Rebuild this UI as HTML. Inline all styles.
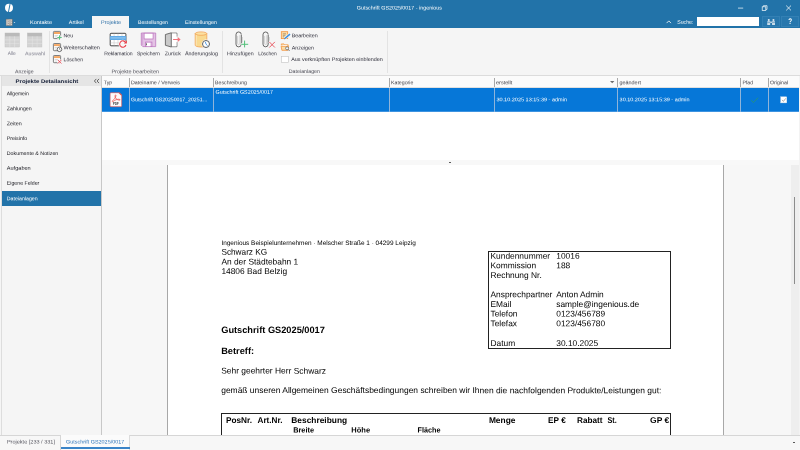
<!DOCTYPE html><html><head><meta charset="utf-8"><title>Gutschrift GS2025/0017 - ingenious</title><style>
html,body{margin:0;padding:0;}body{width:800px;height:450px;overflow:hidden;position:relative;background:#f5f5f5;font-family:"Liberation Sans", sans-serif;}
#app{position:absolute;left:0;top:0;width:800px;height:450px;overflow:hidden;will-change:transform;}
#app div{position:absolute;}
#app span{position:absolute;left:0;top:0;white-space:nowrap;line-height:1;transform-origin:0 0;}
#app svg{position:absolute;left:0;top:0;}
</style></head><body><div id="app">
<div style="left:0px;top:0px;width:800px;height:27.5px;background:#2273a9;"></div>
<div style="left:92.3px;top:16px;width:36.7px;height:12px;background:#f5f5f5;"></div>
<div style="left:0px;top:27.5px;width:800px;height:48px;background:#f5f5f5;"></div>
<div style="left:0px;top:75.3px;width:800px;height:0.9px;background:#dcdcdc;"></div>
<div style="left:49.4px;top:30.5px;width:0.8px;height:42px;background:#e3e3e3;"></div>
<div style="left:222.4px;top:30.5px;width:0.8px;height:42px;background:#e3e3e3;"></div>
<div style="left:386.6px;top:30.5px;width:0.8px;height:42px;background:#e3e3e3;"></div>
<div style="left:696.9px;top:17.3px;width:62.1px;height:9px;background:#ffffff;"></div>
<div style="left:762.2px;top:16px;width:17.5px;height:10.9px;background:#2777ad;border:0.6px solid #3380b4;box-sizing:border-box;"></div>
<div style="left:781.2px;top:16px;width:17.6px;height:10.9px;background:#2777ad;border:0.6px solid #3380b4;box-sizing:border-box;"></div>
<div style="left:0px;top:76.2px;width:102px;height:359px;background:#f5f5f5;"></div>
<div style="left:1.2px;top:76.2px;width:0.7px;height:359px;background:#dddddd;"></div>
<div style="left:1.6px;top:76.2px;width:99.6px;height:9.5px;background:#e5e5e5;"></div>
<div style="left:1.6px;top:191.3px;width:99.7px;height:14.4px;background:#2273a9;"></div>
<div style="left:101.2px;top:76.2px;width:0.8px;height:359px;background:#c8c8c8;"></div>
<div style="left:102px;top:76.2px;width:698px;height:84px;background:#ffffff;"></div>
<div style="left:102px;top:76.2px;width:698px;height:11.4px;background:#fbfbfb;"></div>
<div style="left:102px;top:87.4px;width:696.5px;height:0.5px;background:#e0e0e0;"></div>
<div style="left:102px;top:87.8px;width:696.5px;height:23.5px;background:#0677d8;"></div>
<div style="left:102px;top:111px;width:696.5px;height:1px;background:#3d93e0;"></div>
<div style="left:129.2px;top:78px;width:0.7px;height:8.8px;background:#a8a8a8;"></div>
<div style="left:129.2px;top:87.8px;width:0.7px;height:24px;background:#8fb4da;"></div>
<div style="left:213.4px;top:78px;width:0.7px;height:8.8px;background:#a8a8a8;"></div>
<div style="left:213.4px;top:87.8px;width:0.7px;height:24px;background:#8fb4da;"></div>
<div style="left:389.2px;top:78px;width:0.7px;height:8.8px;background:#a8a8a8;"></div>
<div style="left:389.2px;top:87.8px;width:0.7px;height:24px;background:#8fb4da;"></div>
<div style="left:494.2px;top:78px;width:0.7px;height:8.8px;background:#a8a8a8;"></div>
<div style="left:494.2px;top:87.8px;width:0.7px;height:24px;background:#8fb4da;"></div>
<div style="left:617.2px;top:78px;width:0.7px;height:8.8px;background:#a8a8a8;"></div>
<div style="left:617.2px;top:87.8px;width:0.7px;height:24px;background:#8fb4da;"></div>
<div style="left:740.4px;top:78px;width:0.7px;height:8.8px;background:#a8a8a8;"></div>
<div style="left:740.4px;top:87.8px;width:0.7px;height:24px;background:#8fb4da;"></div>
<div style="left:768.2px;top:78px;width:0.7px;height:8.8px;background:#a8a8a8;"></div>
<div style="left:768.2px;top:87.8px;width:0.7px;height:24px;background:#8fb4da;"></div>
<div style="left:798.5px;top:76.2px;width:1.5px;height:359px;background:#f3f3f3;"></div>
<div style="left:102px;top:160px;width:696.5px;height:5px;background:#f8f8f8;"></div>
<div style="left:102px;top:164.8px;width:696.5px;height:270.4px;background:#f7f7f7;"></div>
<div style="left:791px;top:164.8px;width:7.6px;height:270.4px;background:#eeeeee;"></div>
<div style="left:793.8px;top:197.3px;width:1.0px;height:87.2px;background:#8c8c8c;"></div>
<div style="left:167.2px;top:164.8px;width:556.8px;height:270.4px;background:#ffffff;border-left:1px solid #a8a8a8;border-right:1px solid #a8a8a8;box-sizing:border-box;"></div>
<div style="left:488.2px;top:251px;width:183.2px;height:98px;background:transparent;border:0.9px solid #222;box-sizing:border-box;"></div>
<div style="left:220.7px;top:413px;width:450.6px;height:30px;background:transparent;border:0.9px solid #222;box-sizing:border-box;"></div>
<div style="left:0px;top:435.2px;width:800px;height:14.8px;background:#f7f7f7;"></div>
<div style="left:0px;top:434.9px;width:61px;height:0.8px;background:#d6d6d6;"></div>
<div style="left:129.6px;top:434.9px;width:670.4px;height:0.8px;background:#d6d6d6;"></div>
<div style="left:60.4px;top:435px;width:0.8px;height:15px;background:#d6d6d6;"></div>
<div style="left:61.2px;top:435.2px;width:68.4px;height:14.8px;background:#fbfbfb;"></div>
<div style="left:129.4px;top:435px;width:0.6px;height:15px;background:#dcdcdc;"></div>
<div style="left:61.2px;top:447px;width:68.4px;height:2px;background:#3a84c8;"></div>
<div style="left:448.8px;top:162px;width:2.5px;height:1px;background:#5a5a5a;"></div>
<div style="left:792.9px;top:442px;width:2.2px;height:1px;background:#5a5a5a;"></div>
<svg width="800" height="450" viewBox="0 0 800 450" fill="none">
<!-- logo -->
<ellipse cx="9" cy="7.85" rx="4" ry="4.15" fill="#fff"/>
<path d="M10.15 3.5 L8.45 12.2" stroke="#2273a9" stroke-width="0.95"/>
<!-- menu icon -->
<rect x="6.1" y="19.1" width="6.1" height="6.5" fill="#ece8e4" stroke="#6b6560" stroke-width="0.5"/>
<path d="M7.9 19.1V25.6 M7.9 21.2H12.2 M7.9 23.4H12.2" stroke="#6b6560" stroke-width="0.5"/>
<path d="M9 20.2H11.3 M9 22.3H11.3 M9 24.5H11.3" stroke="#8a847e" stroke-width="0.6"/>
<path d="M13.6 22 L15.4 22 L14.5 23.1Z" fill="#e6eef5"/>
<!-- window controls -->
<path d="M738 8.1H743.2" stroke="#fff" stroke-width="0.7"/>
<rect x="762.2" y="6.8" width="3.6" height="3.8" stroke="#fff" stroke-width="0.7"/>
<path d="M763.4 6.6V5.7H767V9.4H766" stroke="#fff" stroke-width="0.7"/>
<path d="M786.2 5.6L791 10.4M791 5.6L786.2 10.4" stroke="#fff" stroke-width="0.75"/>
<!-- caret -->
<path d="M666.6 23.1L668.8 20.9L671 23.1" stroke="#fff" stroke-width="0.8"/>
<!-- binoculars -->
<g fill="#dbe7f0" opacity="0.92">
<rect x="767.2" y="21.2" width="3" height="3.9" rx="0.5"/>
<rect x="772" y="21.2" width="3" height="3.9" rx="0.5"/>
<rect x="767.9" y="19" width="1.7" height="2.4"/>
<rect x="772.6" y="19" width="1.7" height="2.4"/>
<rect x="770" y="21.6" width="2.2" height="1.3"/>
</g>
<path d="M767.2 22.6H770.2M772 22.6H775" stroke="#2777ad" stroke-width="0.5"/>
<!-- Alle / Auswahl table icons (disabled) -->
<g id="tblg">
<rect x="5" y="33" width="14.4" height="14" fill="#d3d3d3" stroke="#c4c4c4" stroke-width="0.5"/>
<rect x="5" y="33" width="14.4" height="3.3" fill="#bababa"/>
<path d="M5 39.9H19.4M5 43.4H19.4M9.8 36.3V47M14.6 36.3V47" stroke="#e6e6e6" stroke-width="0.55"/>
</g>
<g>
<rect x="27.5" y="33" width="14.4" height="14" fill="#d3d3d3" stroke="#c4c4c4" stroke-width="0.5"/>
<rect x="27.5" y="33" width="14.4" height="3.3" fill="#bababa"/>
<path d="M27.5 39.9H41.9M27.5 43.4H41.9M32.3 36.3V47M37.1 36.3V47" stroke="#e6e6e6" stroke-width="0.55"/>
</g>
<!-- small icons: Neu / Weiterschalten / Loeschen -->
<g>
<rect x="53.4" y="31.4" width="7.2" height="7.2" rx="0.8" fill="#fff" stroke="#4a4a4a" stroke-width="0.7"/>
<rect x="54" y="32" width="6" height="2" fill="#f6a864"/>
<path d="M54.6 35.4H58M54.6 36.9H57" stroke="#b5b5b5" stroke-width="0.5"/>
<path d="M59.5 35V40M57 37.5H62" stroke="#f5f5f5" stroke-width="2"/>
<path d="M59.5 35.3V39.7M57.3 37.5H61.7" stroke="#56c480" stroke-width="1"/>
</g>
<g>
<rect x="53.4" y="43.5" width="7.2" height="7.2" rx="0.8" fill="#fff" stroke="#4a4a4a" stroke-width="0.7"/>
<rect x="54" y="44.1" width="6" height="2" fill="#f6a864"/>
<path d="M54.6 47.5H57M54.6 49H56.6" stroke="#b5b5b5" stroke-width="0.5"/>
<circle cx="59.5" cy="49.3" r="2.3" fill="#fff" stroke="#3c3c3c" stroke-width="0.7"/>
<path d="M59.5 47.9V49.4L60.5 50" stroke="#3c3c3c" stroke-width="0.5"/>
</g>
<g>
<rect x="53.4" y="55.5" width="7.2" height="7.2" rx="0.8" fill="#fff" stroke="#4a4a4a" stroke-width="0.7"/>
<rect x="54" y="56.1" width="6" height="2" fill="#f6a864"/>
<path d="M54.6 59.5H58M54.6 61H57" stroke="#b5b5b5" stroke-width="0.5"/>
<path d="M57.6 59.7L61.6 63.7M61.6 59.7L57.6 63.7" stroke="#f5f5f5" stroke-width="1.8"/>
<path d="M57.8 59.9L61.4 63.5M61.4 59.9L57.8 63.5" stroke="#e8444e" stroke-width="0.85"/>
</g>
<!-- Reklamation -->
<g>
<rect x="110.2" y="33.3" width="15.7" height="12.5" rx="0.8" fill="#fff" stroke="#3a3a3a" stroke-width="0.95"/>
<path d="M110.6 42.9H125.5M114.1 33.7V45.4M118 33.7V45.4M122 33.7V45.4" stroke="#c9c9c9" stroke-width="0.6"/>
<rect x="109.9" y="36.1" width="16.3" height="3.8" rx="0.6" fill="#5fa9e6"/>
<rect x="110.6" y="37.2" width="14.9" height="1.4" fill="#8cc4f0"/>
<circle cx="122.8" cy="44.1" r="4.3" fill="#f7f7f7"/>
<path d="M125.6 42.4A3.2 3.2 0 1 0 125.9 45" stroke="#e8414b" stroke-width="1.05"/>
<path d="M126.9 40.3V43.4H123.8Z" fill="#e8414b"/>
</g>
<!-- Speichern -->
<g>
<path d="M141.3 33H155.7V46.6H142.8L141.3 45.1Z" fill="#e4c2e5" stroke="#bd78bf" stroke-width="0.8"/>
<path d="M142.6 33.4V45.2" stroke="#cf9bd2" stroke-width="0.7"/>
<rect x="144.1" y="33.2" width="9" height="5.8" fill="#fff" stroke="#bd78bf" stroke-width="0.8"/>
<rect x="145.6" y="42.1" width="6.3" height="4.5" fill="#e9cdea" stroke="#bd78bf" stroke-width="0.8"/>
<rect x="146.6" y="42.8" width="3.6" height="3.4" fill="#fff"/>
<rect x="146.2" y="43.4" width="0.8" height="1.8" fill="#4a5a4a"/>
</g>
<!-- Zurueck -->
<g>
<path d="M171.3 33.1H176.9V36.6M176.9 42.1V46.7H171.3" fill="none" stroke="#555" stroke-width="0.8"/>
<rect x="171.3" y="33.5" width="5.2" height="12.8" fill="#fff"/>
<path d="M171.3 32.8L165.4 34.5V45.3L171.3 47Z" fill="#c9c9c9" stroke="#555" stroke-width="0.8" stroke-linejoin="round"/>
<path d="M173.1 39.5H178.4" stroke="#f0626c" stroke-width="0.9"/>
<path d="M177.7 37.1L180.6 39.5L177.7 41.9Z" fill="#f2727b"/>
</g>
<!-- Aenderungslog -->
<g>
<path d="M195.2 33.6V45.2A5.8 1.8 0 0 0 206.8 45.2V33.6Z" fill="#f9d98f" stroke="#f2a356" stroke-width="0.8"/>
<ellipse cx="201" cy="33.6" rx="5.8" ry="1.7" fill="#fbe0a0" stroke="#f2a356" stroke-width="0.8"/>
<path d="M196.3 35V45.6" stroke="#fbe7b8" stroke-width="0.9"/>
<circle cx="206" cy="44" r="4.4" fill="#f7f7f7"/>
<circle cx="206" cy="44" r="3.5" fill="#fff" stroke="#555" stroke-width="0.95"/>
<path d="M205.4 41.9L206 44.2L207.6 45.7" stroke="#3a8be0" stroke-width="0.85"/>
</g>
<!-- Hinzufuegen: paperclip + plus -->
<g>
<path d="M241.3 35V44.2A2.65 2.65 0 0 1 236 44.2V34.6A2.65 2.65 0 0 1 241.3 34.6" stroke="#444" stroke-width="0.8"/>
<path d="M237.6 36V43.4A1.1 1.1 0 0 0 239.8 43.4V35.2" stroke="#bcbcbc" stroke-width="0.6"/>
<path d="M242.4 37V42.4" stroke="#bcbcbc" stroke-width="0.6"/>
<path d="M244.6 40.4V47.6M241 44.3H248.4" stroke="#f5f5f5" stroke-width="2.2"/>
<path d="M244.6 40.6V47.4M241.2 44.3H248.2" stroke="#52c07a" stroke-width="1.0"/>
</g>
<!-- Loeschen: paperclip + x -->
<g>
<path d="M268.2 35V44.2A2.6 2.6 0 0 1 263 44.2V34.6A2.6 2.6 0 0 1 268.2 34.6" stroke="#444" stroke-width="0.8"/>
<path d="M264.6 36V43.4A1.05 1.05 0 0 0 266.7 43.4V35.2" stroke="#bcbcbc" stroke-width="0.6"/>
<path d="M269.4 37V40.6" stroke="#bcbcbc" stroke-width="0.6"/>
<path d="M269.1 41.7L275.1 47.7M275.1 41.7L269.1 47.7" stroke="#f5f5f5" stroke-width="2"/>
<path d="M269.3 41.9L274.9 47.5M274.9 41.9L269.3 47.5" stroke="#e8505a" stroke-width="0.9"/>
</g>
<!-- Bearbeiten -->
<g>
<rect x="281.3" y="31.7" width="6.4" height="6.9" fill="#fcdca6" stroke="#f2933c" stroke-width="0.8"/>
<path d="M282.8 33.8H286M282.8 35.3H285.4M282.8 36.8H284.4" stroke="#6b5a48" stroke-width="0.5"/>
<path d="M284.6 38.6L290.1 34" stroke="#f5f5f5" stroke-width="2.6"/>
<path d="M284.8 38.5L290 34.1" stroke="#3b8fe2" stroke-width="1.5"/>
<path d="M283.9 39.3L284.4 38.2L285.2 39Z" fill="#555"/>
</g>
<!-- Anzeigen -->
<g>
<path d="M281.3 45.3V43.9H284L284.8 44.8H288.2V46" fill="#fbd49a" stroke="#f2933c" stroke-width="0.7"/>
<rect x="282.6" y="45" width="4.6" height="2.5" fill="#fff"/>
<path d="M281.1 46.3H288.6L287.8 50.3H281.9Z" fill="#fcdca6" stroke="#f2933c" stroke-width="0.8" stroke-linejoin="round"/>
<circle cx="287.1" cy="48.3" r="1.55" fill="#eef4fa" stroke="#444" stroke-width="0.55"/>
<path d="M288.2 49.4L289.6 51" stroke="#444" stroke-width="0.7"/>
</g>
<!-- checkbox -->
<rect x="281.4" y="56.4" width="6.9" height="6.1" fill="#fff" stroke="#c2c2c2" stroke-width="0.6"/>
<!-- PDF icon -->
<g>
<path d="M111 92.7H119L121.7 95.4V105.8A0.9 0.9 0 0 1 120.8 106.7H111A0.9 0.9 0 0 1 110.1 105.8V93.6A0.9 0.9 0 0 1 111 92.7Z" fill="#fdfafa" stroke="#de4a44" stroke-width="0.6"/>
<path d="M119 92.7L121.7 95.4" stroke="#e0605a" stroke-width="1.1"/>
<path d="M115.6 94.9C114.7 94.9 114.9 96.8 115.6 98C116.4 99.4 118 100 119.6 100.2C120.5 100.3 120.3 99.2 119 99.2C117 99.2 114.7 100 113.4 101.4C112.6 102.3 112 101.6 112.6 100.8C113.8 99.5 115.6 97.6 115.9 96C116 95.4 115.9 94.9 115.6 94.9Z" fill="none" stroke="#ee4f4a" stroke-width="0.75" stroke-linejoin="round"/>
<text x="113.1" y="105" font-family="Liberation Sans, sans-serif" font-size="3.3" font-weight="bold" fill="#2b2b2b" textLength="5.5" lengthAdjust="spacingAndGlyphs">PDF</text>
</g>
<!-- collapse chevrons -->
<path d="M96.3 78.9L94.4 81L96.3 83.1M99 78.9L97.1 81L99 83.1" stroke="#3a3a3a" stroke-width="0.75"/>
<!-- sort arrow -->
<path d="M610 80.9H614.4L612.2 83.3Z" fill="#6e6e6e"/>
<!-- green check -->
<path d="M751.3 100.3L753.3 102.5L758.2 97.7" stroke="#2f9c5a" stroke-width="0.7"/>
<!-- checked box -->
<rect x="780.7" y="96.8" width="6.1" height="6.1" fill="#fff" stroke="#d0dcea" stroke-width="0.4"/>
<path d="M782 99.9L783.4 101.4L785.8 98.3" stroke="#777" stroke-width="0.6"/>
</svg>

<span style="font-size:5.2px;color:#ffffff;transform:translate(356.80px,5.53px) rotate(0.03deg) scaleX(1.0329);">Gutschrift GS2025/0017 - ingenious</span>
<span style="font-size:5.2px;color:#ffffff;transform:translate(30.00px,20.03px) rotate(0.03deg) scaleX(1.0738);">Kontakte</span>
<span style="font-size:5.2px;color:#ffffff;transform:translate(68.80px,20.03px) rotate(0.03deg) scaleX(1.0399);">Artikel</span>
<span style="font-size:5.2px;color:#2b6ea6;transform:translate(101.00px,20.03px) rotate(0.03deg) scaleX(1.0508);">Projekte</span>
<span style="font-size:5.2px;color:#ffffff;transform:translate(138.00px,20.03px) rotate(0.03deg);">Bestellungen</span>
<span style="font-size:5.2px;color:#ffffff;transform:translate(185.00px,20.03px) rotate(0.03deg) scaleX(1.0270);">Einstellungen</span>
<span style="font-size:5.2px;color:#ffffff;transform:translate(677.20px,19.73px) rotate(0.03deg) scaleX(1.0087);">Suche:</span>
<span style="font-size:8.2px;color:#ffffff;font-weight:bold;transform:translate(788.20px,18.06px) rotate(0.03deg) scaleX(0.7769);">?</span>
<span style="font-size:5.2px;color:#81818f;transform:translate(7.80px,51.33px) rotate(0.03deg) scaleX(0.9239);">Alle</span>
<span style="font-size:5.2px;color:#81818f;transform:translate(25.00px,51.33px) rotate(0.03deg) scaleX(1.0198);">Auswahl</span>
<span style="font-size:5.2px;color:#50505a;transform:translate(15.00px,69.23px) rotate(0.03deg) scaleX(0.9919);">Anzeige</span>
<span style="font-size:5.2px;color:#2c2c38;transform:translate(63.60px,33.13px) rotate(0.03deg) scaleX(1.0069);">Neu</span>
<span style="font-size:5.2px;color:#2c2c38;transform:translate(63.60px,45.33px) rotate(0.03deg) scaleX(1.0578);">Weiterschalten</span>
<span style="font-size:5.2px;color:#2c2c38;transform:translate(63.60px,57.33px) rotate(0.03deg) scaleX(0.9884);">Löschen</span>
<span style="font-size:5.2px;color:#2c2c38;transform:translate(104.20px,51.33px) rotate(0.03deg) scaleX(0.9845);">Reklamation</span>
<span style="font-size:5.2px;color:#2c2c38;transform:translate(137.00px,51.33px) rotate(0.03deg) scaleX(0.9759);">Speichern</span>
<span style="font-size:5.2px;color:#2c2c38;transform:translate(164.80px,51.33px) rotate(0.03deg) scaleX(1.0087);">Zurück</span>
<span style="font-size:5.2px;color:#2c2c38;transform:translate(185.00px,51.33px) rotate(0.03deg) scaleX(1.0307);">Änderungslog</span>
<span style="font-size:5.2px;color:#50505a;transform:translate(111.40px,69.13px) rotate(0.03deg) scaleX(1.0577);">Projekte bearbeiten</span>
<span style="font-size:5.2px;color:#2c2c38;transform:translate(227.00px,51.33px) rotate(0.03deg) scaleX(1.0132);">Hinzufügen</span>
<span style="font-size:5.2px;color:#2c2c38;transform:translate(258.20px,51.33px) rotate(0.03deg) scaleX(0.9374);">Löschen</span>
<span style="font-size:5.2px;color:#2c2c38;transform:translate(291.80px,33.23px) rotate(0.03deg) scaleX(1.0320);">Bearbeiten</span>
<span style="font-size:5.2px;color:#2c2c38;transform:translate(291.80px,45.43px) rotate(0.03deg) scaleX(1.0257);">Anzeigen</span>
<span style="font-size:5.2px;color:#2c2c38;transform:translate(291.20px,57.03px) rotate(0.03deg) scaleX(1.0436);">Aus verknüpften Projekten einblenden</span>
<span style="font-size:5.2px;color:#50505a;transform:translate(288.80px,69.03px) rotate(0.03deg) scaleX(1.0202);">Dateianlagen</span>
<span style="font-size:5.2px;color:#101a33;font-weight:bold;transform:translate(15.60px,79.03px) rotate(0.03deg) scaleX(1.1567);">Projekte Detailansicht</span>
<span style="font-size:5.2px;color:#15151c;transform:translate(6.80px,91.33px) rotate(0.03deg) scaleX(0.9656);">Allgemein</span>
<span style="font-size:5.2px;color:#15151c;transform:translate(6.80px,106.23px) rotate(0.03deg) scaleX(1.0149);">Zahlungen</span>
<span style="font-size:5.2px;color:#15151c;transform:translate(6.80px,121.13px) rotate(0.03deg) scaleX(1.0260);">Zeiten</span>
<span style="font-size:5.2px;color:#15151c;transform:translate(6.80px,136.03px) rotate(0.03deg) scaleX(1.0104);">Preisinfo</span>
<span style="font-size:5.2px;color:#15151c;transform:translate(6.80px,150.93px) rotate(0.03deg) scaleX(1.0204);">Dokumente &amp; Notizen</span>
<span style="font-size:5.2px;color:#15151c;transform:translate(6.80px,165.83px) rotate(0.03deg) scaleX(1.0755);">Aufgaben</span>
<span style="font-size:5.2px;color:#15151c;transform:translate(6.80px,180.73px) rotate(0.03deg) scaleX(1.0057);">Eigene Felder</span>
<span style="font-size:5.2px;color:#ffffff;transform:translate(6.80px,196.13px) rotate(0.03deg) scaleX(1.0104);">Dateianlagen</span>
<span style="font-size:5.2px;color:#3c3c44;transform:translate(103.80px,80.13px) rotate(0.03deg);">Typ</span>
<span style="font-size:5.2px;color:#3c3c44;transform:translate(131.00px,80.13px) rotate(0.03deg) scaleX(1.0298);">Dateiname / Verweis</span>
<span style="font-size:5.2px;color:#3c3c44;transform:translate(215.00px,80.13px) rotate(0.03deg) scaleX(1.0083);">Beschreibung</span>
<span style="font-size:5.2px;color:#3c3c44;transform:translate(391.00px,80.13px) rotate(0.03deg) scaleX(1.0080);">Kategorie</span>
<span style="font-size:5.2px;color:#3c3c44;transform:translate(496.00px,80.13px) rotate(0.03deg) scaleX(1.0730);">erstellt</span>
<span style="font-size:5.2px;color:#3c3c44;transform:translate(619.40px,80.13px) rotate(0.03deg) scaleX(1.0543);">geändert</span>
<span style="font-size:5.2px;color:#3c3c44;transform:translate(742.40px,80.13px) rotate(0.03deg) scaleX(0.9930);">Pfad</span>
<span style="font-size:5.2px;color:#3c3c44;transform:translate(770.00px,80.13px) rotate(0.03deg) scaleX(1.0060);">Original</span>
<span style="font-size:5.2px;color:#ffffff;transform:translate(131.00px,97.23px) rotate(0.03deg);">Gutschrift GS20250017_20251…</span>
<span style="font-size:5.2px;color:#ffffff;transform:translate(215.50px,89.73px) rotate(0.03deg) scaleX(1.0331);">Gutschrift GS2025/0017</span>
<span style="font-size:5.2px;color:#ffffff;transform:translate(496.40px,97.33px) rotate(0.03deg) scaleX(1.0641);">30.10.2025 13:15:39 - admin</span>
<span style="font-size:5.2px;color:#ffffff;transform:translate(619.60px,97.33px) rotate(0.03deg) scaleX(1.0551);">30.10.2025 13:15:39 - admin</span>
<span style="font-size:5.2px;color:#55555f;transform:translate(6.90px,439.53px) rotate(0.03deg) scaleX(1.0688);">Projekte [233 / 331]</span>
<span style="font-size:5.2px;color:#2a72b8;transform:translate(66.10px,439.43px) rotate(0.03deg) scaleX(1.0439);">Gutschrift GS2025/0017</span>
<span style="font-size:6.45px;color:#000000;transform:translate(221.40px,239.94px) rotate(0.03deg);">Ingenious Beispielunternehmen · Melscher Straße 1 · 04299 Leipzig</span>
<span style="font-size:8.4px;color:#000000;transform:translate(221.40px,247.79px) rotate(0.03deg) scaleX(0.9839);">Schwarz KG</span>
<span style="font-size:8.4px;color:#000000;transform:translate(221.40px,257.44px) rotate(0.03deg);">An der Städtebahn 1</span>
<span style="font-size:8.4px;color:#000000;transform:translate(221.40px,267.09px) rotate(0.03deg);">14806 Bad Belzig</span>
<span style="font-size:8.4px;color:#000000;transform:translate(490.50px,251.69px) rotate(0.03deg);">Kundennummer</span>
<span style="font-size:8.4px;color:#000000;transform:translate(556.25px,251.69px) rotate(0.03deg);">10016</span>
<span style="font-size:8.4px;color:#000000;transform:translate(490.50px,261.33px) rotate(0.03deg);">Kommission</span>
<span style="font-size:8.4px;color:#000000;transform:translate(556.25px,261.33px) rotate(0.03deg);">188</span>
<span style="font-size:8.4px;color:#000000;transform:translate(490.50px,270.98px) rotate(0.03deg);">Rechnung Nr.</span>
<span style="font-size:8.4px;color:#000000;transform:translate(490.50px,290.27px) rotate(0.03deg);">Ansprechpartner</span>
<span style="font-size:8.4px;color:#000000;transform:translate(556.25px,290.27px) rotate(0.03deg);">Anton Admin</span>
<span style="font-size:8.4px;color:#000000;transform:translate(490.50px,299.91px) rotate(0.03deg);">EMail</span>
<span style="font-size:8.4px;color:#000000;transform:translate(556.25px,299.91px) rotate(0.03deg);">sample@ingenious.de</span>
<span style="font-size:8.4px;color:#000000;transform:translate(490.50px,309.56px) rotate(0.03deg);">Telefon</span>
<span style="font-size:8.4px;color:#000000;transform:translate(556.25px,309.56px) rotate(0.03deg);">0123/456789</span>
<span style="font-size:8.4px;color:#000000;transform:translate(490.50px,319.20px) rotate(0.03deg);">Telefax</span>
<span style="font-size:8.4px;color:#000000;transform:translate(556.25px,319.20px) rotate(0.03deg);">0123/456780</span>
<span style="font-size:8.4px;color:#000000;transform:translate(490.50px,339.09px) rotate(0.03deg);">Datum</span>
<span style="font-size:8.4px;color:#000000;transform:translate(556.25px,339.09px) rotate(0.03deg);">30.10.2025</span>
<span style="font-size:9.24px;color:#000;font-weight:bold;transform:translate(221.20px,325.98px) rotate(0.03deg);">Gutschrift GS2025/0017</span>
<span style="font-size:9.24px;color:#000;font-weight:bold;transform:translate(221.20px,346.88px) rotate(0.03deg);">Betreff:</span>
<span style="font-size:8.4px;color:#000000;transform:translate(221.20px,366.59px) rotate(0.03deg) scaleX(1.0051);">Sehr geehrter Herr Schwarz</span>
<span style="font-size:8.4px;color:#000000;transform:translate(221.20px,385.99px) rotate(0.03deg) scaleX(1.0090);">gemäß unseren Allgemeinen Geschäftsbedingungen schreiben wir Ihnen die nachfolgenden Produkte/Leistungen gut:</span>
<span style="font-size:8.4px;color:#000;font-weight:bold;transform:translate(226.00px,415.89px) rotate(0.03deg) scaleX(0.9836);">PosNr.</span>
<span style="font-size:8.4px;color:#000;font-weight:bold;transform:translate(257.50px,415.89px) rotate(0.03deg) scaleX(0.9760);">Art.Nr.</span>
<span style="font-size:8.4px;color:#000;font-weight:bold;transform:translate(291.30px,415.89px) rotate(0.03deg);">Beschreibung</span>
<span style="font-size:8.4px;color:#000;font-weight:bold;transform:translate(488.90px,415.89px) rotate(0.03deg);">Menge</span>
<span style="font-size:8.4px;color:#000;font-weight:bold;transform:translate(548.10px,415.89px) rotate(0.03deg) scaleX(0.9767);">EP €</span>
<span style="font-size:8.4px;color:#000;font-weight:bold;transform:translate(577.00px,415.89px) rotate(0.03deg) scaleX(0.9783);">Rabatt</span>
<span style="font-size:8.4px;color:#000;font-weight:bold;transform:translate(607.40px,415.89px) rotate(0.03deg) scaleX(0.8685);">St.</span>
<span style="font-size:8.4px;color:#000;font-weight:bold;transform:translate(650.10px,415.89px) rotate(0.03deg) scaleX(1.0083);">GP €</span>
<span style="font-size:7.5px;color:#000;font-weight:bold;transform:translate(293.20px,426.45px) rotate(0.03deg) scaleX(0.9779);">Breite</span>
<span style="font-size:7.5px;color:#000;font-weight:bold;transform:translate(351.30px,426.45px) rotate(0.03deg);">Höhe</span>
<span style="font-size:7.5px;color:#000;font-weight:bold;transform:translate(417.60px,426.45px) rotate(0.03deg) scaleX(0.9634);">Fläche</span>
</div></body></html>
